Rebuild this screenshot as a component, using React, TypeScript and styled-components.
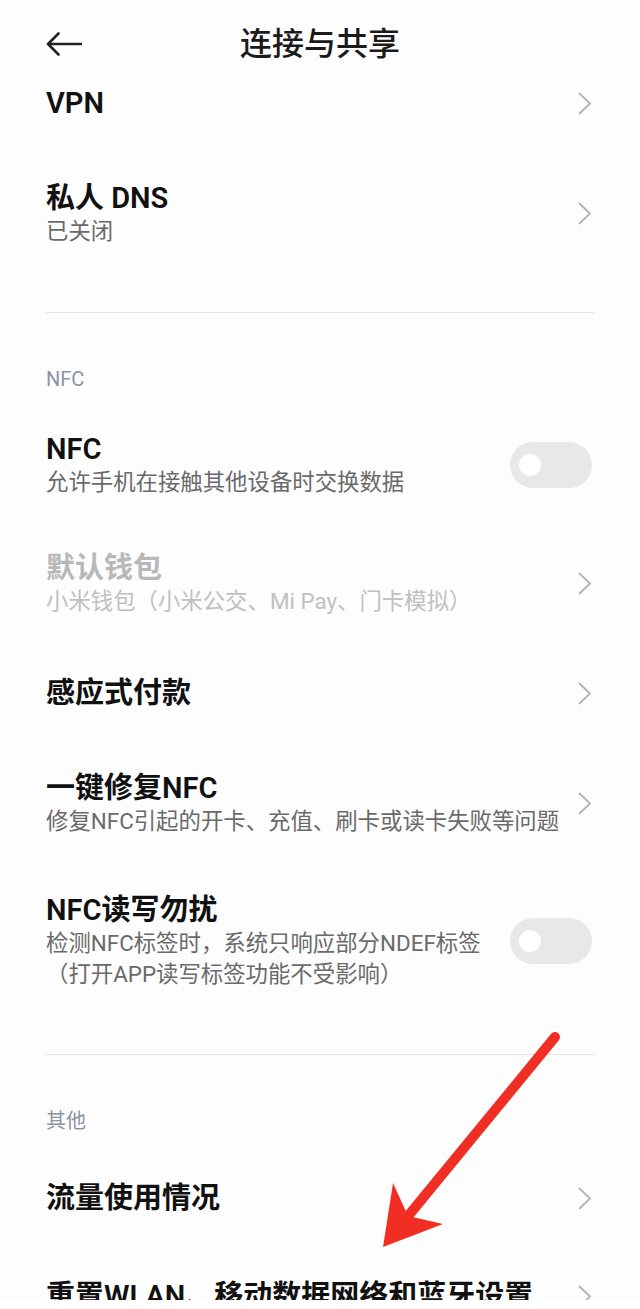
import React from 'react';
import styled, { createGlobalStyle } from 'styled-components';

const GlobalStyle = createGlobalStyle`
  html, body {
    margin: 0;
    padding: 0;
    background: #ffffff;
  }
  body {
    font-family: Roboto, "Noto Sans CJK SC", sans-serif;
    color: #111111;
  }
`;

const Page = styled.div`
  position: relative;
  width: 640px;
  height: 1300px;
  overflow: hidden;
  background: #fdfdfd;
`;

const Header = styled.div`
  display: flex;
  align-items: center;
  height: 27px;
  padding: 30px 46px 0;
`;

const BackButton = styled.div`
  width: 36px;
  display: flex;
  align-items: center;
`;

const HeaderTitle = styled.div`
  flex: 1;
  text-align: center;
  font-size: 32px;
  line-height: 40px;
  font-weight: 500;
  color: #1a1a1a;
`;

const HeaderSpacer = styled.div`
  width: 36px;
`;

const Row = styled.div<{ $pt: number; $pb: number }>`
  display: flex;
  align-items: center;
  padding: ${(p) => p.$pt}px 48px ${(p) => p.$pb}px 46px;
  gap: 16px;
`;

const RowText = styled.div`
  flex: 1;
  min-width: 0;
  display: flex;
  flex-direction: column;
`;

const Title = styled.div<{ $disabled?: boolean }>`
  font-size: 29px;
  line-height: 36px;
  font-weight: 600;
  color: ${(p) => (p.$disabled ? '#b8b8b8' : '#111111')};
`;

const Subtitle = styled.div<{ $disabled?: boolean }>`
  font-size: 22.4px;
  line-height: 31px;
  color: ${(p) => (p.$disabled ? '#c0c0c0' : '#6a6a6a')};
`;

const Divider = styled.div`
  height: 1px;
  margin: 41px 46px 0;
  background: #e6e6e6;
`;

const SectionLabel = styled.div<{ $pb: number }>`
  padding: 54px 46px ${(p) => p.$pb}px;
  font-size: 20px;
  line-height: 24px;
  color: #8d93a0;
`;

const Toggle = styled.div`
  flex: none;
  width: 82px;
  height: 46px;
  border-radius: 23px;
  background: #e8e8e8;
  display: flex;
  align-items: center;
  padding-left: 9px;
  box-sizing: border-box;
`;

const Knob = styled.div`
  width: 22px;
  height: 22px;
  border-radius: 50%;
  background: #ffffff;
`;

const ChevronBox = styled.div`
  flex: none;
  width: 14px;
  display: flex;
  justify-content: flex-end;
`;

const ArrowOverlay = styled.svg`
  position: absolute;
  left: 370px;
  top: 1025px;
  width: 200px;
  height: 240px;
  pointer-events: none;
`;

const Chevron = () => (
  <ChevronBox>
    <svg width="14" height="23" viewBox="0 0 14 23">
      <polyline
        points="1.5,1.5 12,11.5 1.5,21.5"
        fill="none"
        stroke="#b3b3b3"
        strokeWidth="1.8"
        strokeLinejoin="round"
        strokeLinecap="round"
      />
    </svg>
  </ChevronBox>
);

const Switch = () => (
  <Toggle>
    <Knob />
  </Toggle>
);

type ItemProps = {
  title: string;
  subtitle?: React.ReactNode;
  disabled?: boolean;
  trailing?: 'chevron' | 'switch';
  pt?: number;
  pb?: number;
};

const Item = ({ title, subtitle, disabled, trailing = 'chevron', pt = 28, pb = 28 }: ItemProps) => (
  <Row $pt={pt} $pb={pb}>
    <RowText>
      <Title $disabled={disabled}>{title}</Title>
      {subtitle && <Subtitle $disabled={disabled}>{subtitle}</Subtitle>}
    </RowText>
    {trailing === 'switch' ? <Switch /> : <Chevron />}
  </Row>
);

export default function App() {
  return (
    <>
      <GlobalStyle />
      <Page>
        <Header>
          <BackButton>
            <svg width="36" height="24" viewBox="0 0 36 24">
              <path
                d="M2 12 H35 M12.5 1.5 L2 12 L12.5 22.5"
                fill="none"
                stroke="#222222"
                strokeWidth="2.6"
                strokeLinecap="round"
                strokeLinejoin="round"
              />
            </svg>
          </BackButton>
          <HeaderTitle>连接与共享</HeaderTitle>
          <HeaderSpacer />
        </Header>

        <Item title="VPN" />
        <Item title="私人 DNS" subtitle="已关闭" pt={31} pb={24} />
        <Divider />

        <SectionLabel $pb={14}>NFC</SectionLabel>
        <Item title="NFC" subtitle="允许手机在接触其他设备时交换数据" trailing="switch" pt={26} pb={24} />
        <Item title="默认钱包" subtitle="小米钱包（小米公交、Mi Pay、门卡模拟）" disabled />
        <Item title="感应式付款" pt={30} pb={31} />
        <Item title="一键修复NFC" subtitle="修复NFC引起的开卡、充值、刷卡或读卡失败等问题" pb={27} />
        <Item
          title="NFC读写勿扰"
          subtitle={
            <>
              检测NFC标签时，系统只响应部分NDEF标签
              <br />
              （打开APP读写标签功能不受影响）
            </>
          }
          trailing="switch"
          pb={23}
        />
        <Divider />

        <SectionLabel $pb={19}>其他</SectionLabel>
        <Item title="流量使用情况" />
        <Item title="重置WLAN、移动数据网络和蓝牙设置" pt={34} />

        <ArrowOverlay viewBox="0 0 200 240">
          <line
            x1="185"
            y1="12"
            x2="34"
            y2="196"
            stroke="#f12e24"
            strokeWidth="10"
            strokeLinecap="round"
          />
          <polygon points="13,222 23,158 38,191 73,199" fill="#f12e24" />
        </ArrowOverlay>
      </Page>
    </>
  );
}
